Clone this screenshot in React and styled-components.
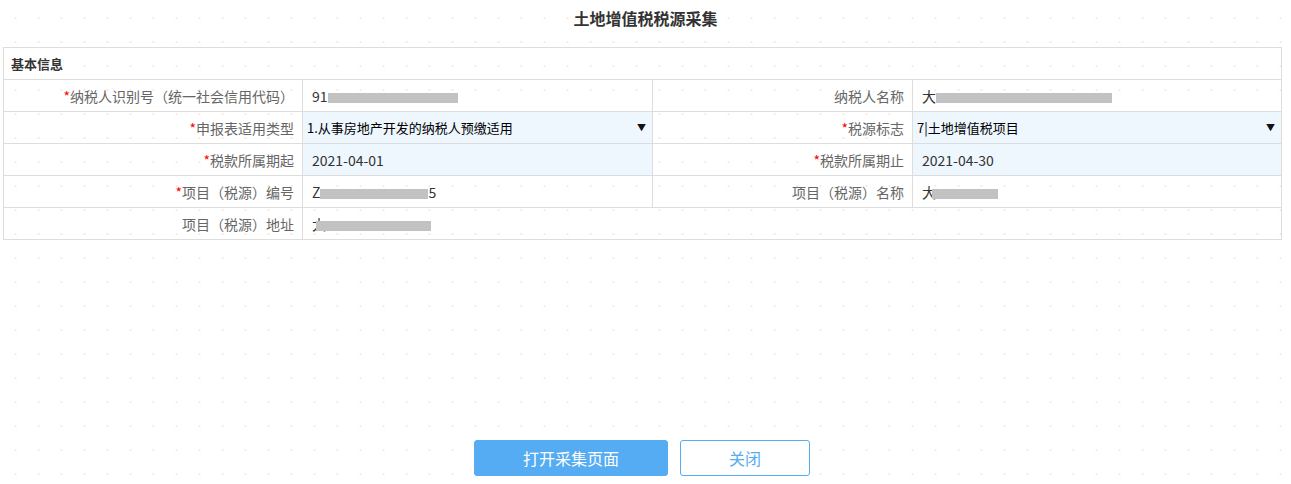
import React from 'react'
import styled, { createGlobalStyle } from 'styled-components'

const GlobalStyle = createGlobalStyle`
    html, body {
        margin: 0;
        padding: 0;
        background: #fff;
    }
    body {
        font-family: "Noto Sans CJK SC", "Noto Sans", sans-serif;
        color: #333;
    }
`

const Page = styled.div`
    width: 1291px;
    height: 484px;
    box-sizing: border-box;
    display: flex;
    flex-direction: column;
    background-color: #fff;
    background-image: radial-gradient(circle, rgba(250, 200, 170, 0.45) 0.8px, transparent 1.3px);
    background-size: 23px 24px;
    background-position: 4px 6px;
`

const Title = styled.h1`
    margin: 0;
    height: 47px;
    line-height: 36px;
    text-align: center;
    font-size: 16px;
    font-weight: bold;
    color: #333;
`

const Table = styled.table`
    margin-left: 3px;
    width: 1278px;
    border-collapse: collapse;
    table-layout: fixed;
    font-size: 14px;

    td {
        border: 1px solid #ddd;
        height: 31px;
        padding: 0;
    }
`

const HeadCell = styled.td`
    padding-left: 7px !important;
    font-size: 13px;
    font-weight: bold;
    color: #333;
`

const Label = styled.td`
    text-align: right;
    padding-right: 8px !important;
    color: #666;
    white-space: nowrap;
`

const Star = styled.span`
    color: #f00;
`

const Value = styled.td`
    padding-left: ${p => (p.$select ? '4px' : '9px')} !important;
    background: ${p => (p.$tint ? '#eef6fe' : 'transparent')};
    color: #333;
`

const SelectBox = styled.div`
    display: flex;
    align-items: center;
    justify-content: space-between;
    padding-right: 6px;
    font-size: 13px;
    color: #000;
`

const Arrow = styled.span`
    font-size: 9px;
    color: #111;
`

const Blur = styled.span`
    display: inline-block;
    width: ${p => p.$w}px;
    height: 10px;
    margin-left: ${p => p.$ml || 0}px;
    background: #c2c2c2;
    vertical-align: middle;
`

const Spacer = styled.div`
    flex: 1;
`

const Actions = styled.div`
    display: flex;
    justify-content: center;
    gap: 12px;
    padding-right: 7px;
    padding-bottom: 8px;
`

const Button = styled.button`
    height: 36px;
    width: ${p => (p.$primary ? '194px' : '130px')};
    border-radius: 3px;
    font-family: inherit;
    font-size: 16px;
    border: 1px solid #55acf2;
    background: ${p => (p.$primary ? '#55acf2' : '#fff')};
    color: ${p => (p.$primary ? '#fff' : '#55acf2')};
    cursor: pointer;
`

export default function App() {
    return (
        <Page>
            <GlobalStyle />
            <Title>土地增值税税源采集</Title>
            <Table>
                <colgroup>
                    <col style={{ width: 299 }} />
                    <col style={{ width: 350 }} />
                    <col style={{ width: 260 }} />
                    <col style={{ width: 369 }} />
                </colgroup>
                <tbody>
                    <tr>
                        <HeadCell colSpan={4}>基本信息</HeadCell>
                    </tr>
                    <tr>
                        <Label><Star>*</Star>纳税人识别号（统一社会信用代码）</Label>
                        <Value>91<Blur $w={130} /></Value>
                        <Label>纳税人名称</Label>
                        <Value>大<Blur $w={176} /></Value>
                    </tr>
                    <tr>
                        <Label><Star>*</Star>申报表适用类型</Label>
                        <Value $tint $select>
                            <SelectBox>1.从事房地产开发的纳税人预缴适用<Arrow>▼</Arrow></SelectBox>
                        </Value>
                        <Label><Star>*</Star>税源标志</Label>
                        <Value $tint $select>
                            <SelectBox>7|土地增值税项目<Arrow>▼</Arrow></SelectBox>
                        </Value>
                    </tr>
                    <tr>
                        <Label><Star>*</Star>税款所属期起</Label>
                        <Value $tint>2021-04-01</Value>
                        <Label><Star>*</Star>税款所属期止</Label>
                        <Value $tint>2021-04-30</Value>
                    </tr>
                    <tr>
                        <Label><Star>*</Star>项目（税源）编号</Label>
                        <Value>Z<Blur $w={108} />5</Value>
                        <Label>项目（税源）名称</Label>
                        <Value>大<Blur $w={66} $ml={-4} /></Value>
                    </tr>
                    <tr>
                        <Label>项目（税源）地址</Label>
                        <Value colSpan={3}>大<Blur $w={115} $ml={-10} /></Value>
                    </tr>
                </tbody>
            </Table>
            <Spacer />
            <Actions>
                <Button $primary>打开采集页面</Button>
                <Button>关闭</Button>
            </Actions>
        </Page>
    )
}
